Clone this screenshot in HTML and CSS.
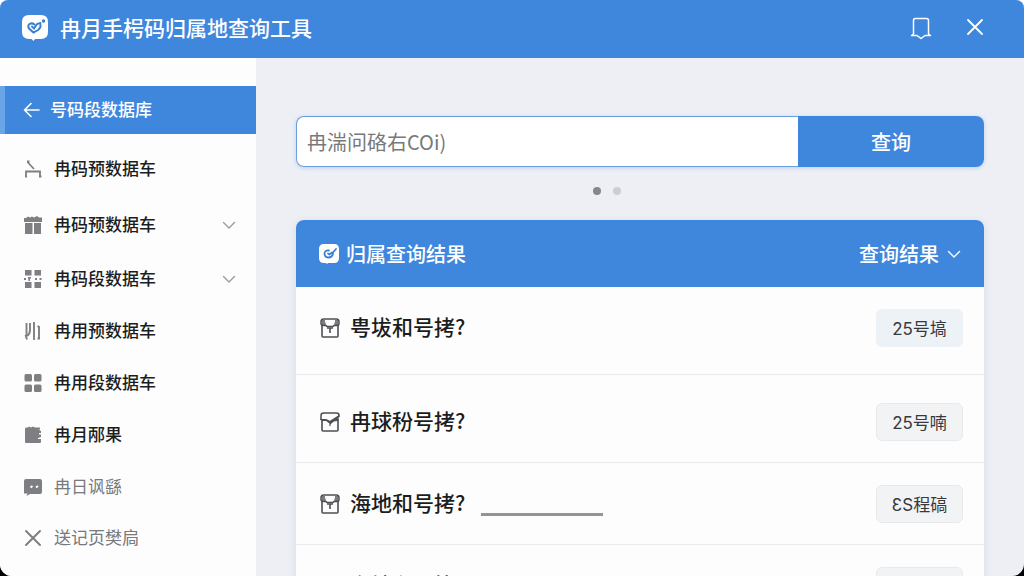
FILE: index.html
```html
<!DOCTYPE html>
<html lang="zh-CN">
  <head>
    <meta charset="UTF-8" />
    <meta name="viewport" content="width=device-width, initial-scale=1.0" />
    <title>冉月手枵码归属地查询工具</title>
    <link rel="stylesheet" href="styles.css">
  </head>
  <body>
    <!-- shared symbols -->
    <svg class="symbols" aria-hidden="true">
      <symbol id="chevron" viewBox="0 0 14 14">
        <path d="M1.5 4.5 7 10l5.5-5.5" fill="none" stroke="currentColor" stroke-width="1.4" stroke-linecap="round" stroke-linejoin="round" />
      </symbol>
      <symbol id="box" viewBox="0 0 20 20">
        <path d="M2 7v11q0 1 1 1h14q1 0 1-1V7" fill="none" stroke="currentColor" stroke-width="1.6" />
        <path d="M3.500 1h13Q19 1 19 4v1q0 2.500-2 2.500h-2.500q-1 0-1.500 1H7q-.5-1-1.500-1H3Q1 7.500 1 5V4q0-3 2.500-3z" fill="none" stroke="currentColor" stroke-width="1.5" />
        <path d="M2 2h3v1.500l1 3-1 1H2zM18 2h-3v1.500l-1 3 1 1h3z" fill="currentColor" opacity=".75" />
        <path d="M7 10h6M10 10v5" fill="none" stroke="currentColor" stroke-width="1.6" />
      </symbol>
      <symbol id="box-check" viewBox="0 0 20 20">
        <path d="M2 7v11q0 1 1 1h14q1 0 1-1V7" fill="none" stroke="currentColor" stroke-width="1.6" />
        <path d="M1 8V3.500Q1 1 3.500 1h13Q19 1 19 3.500V5" fill="none" stroke="currentColor" stroke-width="1.5" />
        <path d="M1 7.500h5l4 2 8.500-5.500-1 4.500-4 .5-3 2.500-4-3H2zM10 10v4" fill="currentColor" stroke="currentColor" stroke-width="1.2" />
      </symbol>
    </svg>

    <div class="app">
      <header class="titlebar">
        <svg class="logo" viewBox="0 0 26 26" aria-hidden="true">
          <path d="M7 0h12q7 0 7 7v10q0 7-7 7h-6l-1.500 2-2-2H7q-7 0-7-7V7q0-7 7-7z" fill="#fff" />
          <path d="M18.500 10q.5 3-2.500 5l-4.500 2.500L7.500 14q-2.500-3 0-5 2.500-1.500 5 .5" fill="none" stroke="#3a7fcd" stroke-width="2" stroke-linecap="round" />
          <path d="m10 11.500 2 2 3-4.500 3.500-1" fill="none" stroke="#3a7fcd" stroke-width="2" stroke-linecap="round" />
          <circle cx="21.500" cy="6" r="1.700" fill="#3a7fcd" />
        </svg>
        <h1>冉月手枵码归属地查询工具</h1>
        <button class="icon-btn" aria-label="收藏">
          <svg viewBox="0 0 24 24"><path d="M4.500 18V4.500q0-2 2-2h11q2 0 2 2V18l2 1.500H16l-4 3-4-3H2.500z" fill="none" stroke="currentColor" stroke-width="1.500" stroke-linejoin="round" /></svg>
        </button>
        <button class="icon-btn" aria-label="关闭">
          <svg viewBox="0 0 24 24"><path d="m5 4 14 14M19 4 5 18" fill="none" stroke="currentColor" stroke-width="1.800" stroke-linecap="round" /></svg>
        </button>
      </header>

      <div class="content">
        <nav class="sidebar">
          <a class="nav-item active" href="#">
            <svg class="nav-icon" viewBox="0 0 18 18"><path d="M16 9H1.500M8 2.500 1.500 9 8 15.500" fill="none" stroke="currentColor" stroke-width="1.600" stroke-linecap="round" stroke-linejoin="round" /></svg>
            <span>号码段数据库</span>
          </a>
          <a class="nav-item tall" href="#">
            <svg class="nav-icon" viewBox="0 0 18 18"><path d="M3.500 2 10 9M3 1.500h2.500M2 17v-5.500h14V17M1 16.500h2M15 16.500h2.500" fill="none" stroke="currentColor" stroke-width="1.800" /></svg>
            <span>冉码预数据车</span>
          </a>
          <a class="nav-item tall" href="#">
            <svg class="nav-icon" viewBox="0 0 18 18"><path d="M0 2h2l2-1.500L6 1.500 8 .5l2 1L13 0l2 1.500h3V6H0zM1 7h7.500v11H1zM10 7h7v11h-7z" fill="currentColor" /></svg>
            <span>冉码预数据车</span>
            <svg class="chevron"><use href="#chevron" /></svg>
          </a>
          <a class="nav-item" href="#">
            <svg class="nav-icon" viewBox="0 0 18 18"><path d="M1 0h6.500v5.500H1zM10.500 0H17v5.500h-6.500zM1 12h6.500v6H1zM10.500 12H17v6h-6.500zM0 8h2v2H0zM4 7h3v1.500H6V11H4.500zM11 8h2v2h-2zM15.500 8h2v2h-2z" fill="currentColor" /></svg>
            <span>冉码段数据车</span>
            <svg class="chevron"><use href="#chevron" /></svg>
          </a>
          <a class="nav-item" href="#">
            <svg class="nav-icon" viewBox="0 0 18 18"><path d="M2.500 1v13M1.500 13l1.500 4.500M6 1v7q0 4-3 6M10 0v18M15 4v12M13.500 4.500H15M13.500 16.500H16" fill="none" stroke="currentColor" stroke-width="1.900" /></svg>
            <span>冉用预数据车</span>
          </a>
          <a class="nav-item" href="#">
            <svg class="nav-icon" viewBox="0 0 18 18" fill="currentColor"><rect x="0.500" y="0" width="7.500" height="7.500" rx="1.500" /><rect x="10" y="0" width="7.500" height="7.500" rx="1.500" /><rect x="0.500" y="10.500" width="7.500" height="7.500" rx="1.500" /><rect x="10" y="10.500" width="7.500" height="7.500" rx="1.500" /></svg>
            <span>冉用段数据车</span>
          </a>
          <a class="nav-item" href="#">
            <svg class="nav-icon" viewBox="0 0 18 18"><path d="M1 3q0-1.500 1-1.500h2L5 .5l2 1 2-1 2 1h5v2h-1.500L17 5v2h-2v1.500h2V11l-3 1v1h3v3q0 1-1 1H2q-1 0-1-1z" fill="currentColor" /></svg>
            <span>冉月邴果</span>
          </a>
          <a class="nav-item muted" href="#">
            <svg class="nav-icon" viewBox="0 0 18 18"><path d="M2 1h14q2 0 2 2v11q0 2-2 2H6l-3.500 2 1-2.500H0V3q0-2 2-2z" fill="currentColor" /><path d="M6.500 9.500 8.500 8M12 9.500 14 8" stroke="#fff" stroke-width="2" /></svg>
            <span>冉日讽繇</span>
          </a>
          <a class="nav-item muted" href="#">
            <svg class="nav-icon" viewBox="0 0 18 18"><path d="m2 2 14 14M16 2 2 16" fill="none" stroke="currentColor" stroke-width="2" stroke-linecap="round" /></svg>
            <span>送记页樊扃</span>
          </a>
        </nav>

        <main class="main">
          <form class="search">
            <input type="text" placeholder="冉湍问硌右COi)" aria-label="号码" />
            <button type="button">查询</button>
          </form>
          <div class="dots"><i class="dot on"></i><i class="dot"></i></div>

          <section class="card">
            <div class="card-head">
              <svg class="card-logo" viewBox="0 0 20 20" aria-hidden="true">
                <path d="M5 0h10q5 0 5 5v9q0 5-5 5H9l-1 1-1-1H5q-5 0-5-5V5q0-5 5-5z" fill="#fff" />
                <path d="M10 6.500q-4.500-.5-4.500 3.500.5 3.500 4.500 3.500 4-.5 4-5L17 5M9 9.500l1.500 1L13 8.500" fill="none" stroke="#3a7fcd" stroke-width="1.800" stroke-linecap="round" />
              </svg>
              <h2>归属查询结果</h2>
              <button class="filter" type="button">查询结果 <svg><use href="#chevron" /></svg></button>
            </div>
            <ul class="results">
              <li class="result first">
                <svg class="box"><use href="#box" /></svg>
                <span class="name">甹坺和号拷?</span>
                <button class="tag blue" type="button">25号塙</button>
              </li>
              <li class="result second">
                <svg class="box"><use href="#box-check" /></svg>
                <span class="name">冉球秎号拷?</span>
                <button class="tag" type="button">25号喃</button>
              </li>
              <li class="result">
                <svg class="box"><use href="#box" /></svg>
                <label class="name" for="place">海地和号拷?</label>
                <input class="blank" id="place" type="text" />
                <button class="tag" type="button">ƐS程碻</button>
              </li>
              <li class="result">
                <svg class="box"><use href="#box" /></svg>
                <span class="name">海地和号拷?</span>
                <button class="tag" type="button">25号塙</button>
              </li>
            </ul>
          </section>
        </main>
      </div>
    </div>
  </body>
</html>
```
FILE: styles.css
```css
* {
  margin: 0;
  padding: 0;
  box-sizing: border-box;
}
html {
  background: linear-gradient(#fff 50%, #000 50%);
}
body,
html {
  height: 100%;
  overflow: hidden;
}
body,
button,
input {
  font-family: "Noto Sans CJK SC", sans-serif;
}
button {
  border: none;
  background: none;
  cursor: pointer;
}
.symbols {
  display: none;
}
.app {
  display: flex;
  flex-direction: column;
  height: 100vh;
  border-radius: 8px 8px 12px 12px;
  overflow: hidden;
  background: #eeeff5;
}

/* title bar */
.titlebar {
  display: flex;
  align-items: center;
  flex: none;
  height: 58px;
  padding: 0 37px 2px 22px;
  background: #3f87dd;
  color: #fff;
}
.logo {
  width: 26px;
  height: 26px;
  margin-right: 12px;
}
h1 {
  flex: 1;
  padding-bottom: 2px;
  font-size: 21px;
  font-weight: 500;
  line-height: 30px;
}
.icon-btn {
  width: 24px;
  height: 24px;
  margin-left: 30px;
  color: #fff;
}
.icon-btn svg {
  display: block;
}

.content {
  display: flex;
  flex: 1;
  min-height: 0;
}

/* sidebar */
.sidebar {
  flex: none;
  width: 256px;
  padding-top: 28px;
  background: #fdfdfe;
}
.nav-item {
  display: flex;
  align-items: center;
  height: 52px;
  padding: 0 20px 0 24px;
  color: #1c1d20;
  font-size: 17px;
  font-weight: 500;
  text-decoration: none;
}
.nav-item span {
  flex: 1;
  padding-bottom: 3px;
}
.nav-icon {
  width: 18px;
  height: 18px;
  margin-right: 12px;
  color: #7d7f82;
}
.nav-item.tall {
  height: 56px;
}
.nav-item.muted {
  height: 51px;
  color: #77797c;
  font-weight: 400;
}
.nav-item.active {
  height: 48px;
  margin-bottom: 7px;
  padding-left: 18px;
  border-left: 5px solid #6ba5e9;
  background: #3f87dd;
  color: #fff;
}
.active .nav-icon {
  margin-right: 9px;
  color: #fff;
}
.chevron {
  width: 14px;
  height: 14px;
  color: #999b9f;
}

/* search */
.main {
  flex: 1;
  min-width: 0;
  padding: 58px 40px 0;
  overflow: hidden;
}
.search {
  display: flex;
  height: 51px;
  border-radius: 8px;
  box-shadow: 0 1px 4px rgba(63, 135, 221, 0.3);
}
.search input {
  flex: 1;
  min-width: 0;
  padding: 0 10px;
  border: 1px solid #6b9fdc;
  border-right: none;
  border-radius: 8px 0 0 8px;
  background: #fff;
  font-size: 20px;
  outline: none;
}
.search input::placeholder {
  color: #77797a;
}
.search button {
  width: 186px;
  border-radius: 0 8px 8px 0;
  background: #3f87dd;
  color: #fff;
  font-size: 20px;
  font-weight: 500;
}
.dots {
  display: flex;
  justify-content: center;
  gap: 12px;
  padding: 20px 66px 25px 0;
}
.dot {
  width: 8px;
  height: 8px;
  border-radius: 50%;
  background: #cdced3;
}
.dot.on {
  background: #85878b;
}

/* results */
.card {
  border-radius: 8px 8px 0 0;
  background: #fdfdfe;
  box-shadow: 0 2px 8px rgba(60, 80, 120, 0.12);
}
.card-head {
  display: flex;
  align-items: center;
  height: 67px;
  padding: 0 23px;
  border-radius: 8px 8px 0 0;
  background: #3f87dd;
  color: #fff;
}
.card-logo {
  width: 20px;
  height: 20px;
  margin-right: 7px;
}
h2 {
  flex: 1;
  font-size: 20px;
  font-weight: 500;
}
.filter {
  display: flex;
  align-items: center;
  gap: 8px;
  color: #fff;
  font-size: 20px;
  font-weight: 500;
}
.filter svg {
  width: 14px;
  height: 14px;
}
.results {
  list-style: none;
}
.result {
  display: flex;
  align-items: center;
  padding: 22px 21px 21px 24px;
  border-bottom: 1px solid #e9eaed;
}
.result.first {
  padding-bottom: 27px;
}
.result.second {
  padding-top: 28px;
}
.box {
  width: 20px;
  height: 20px;
  margin-right: 10px;
  color: #4d4f52;
}
.name {
  padding-bottom: 4px;
  color: #1c1d20;
  font-size: 21px;
  font-weight: 500;
  line-height: 30px;
}
.blank {
  width: 122px;
  height: 24px;
  margin-left: 16px;
  border: none;
  border-bottom: 3px solid #929496;
  background: none;
  font-size: 17px;
  outline: none;
}
.tag {
  width: 87px;
  height: 38px;
  margin-left: auto;
  padding-bottom: 2px;
  border: 1px solid #e8e9eb;
  border-radius: 6px;
  background: #f2f3f4;
  color: #37393c;
  font-family: Inter, "Noto Sans CJK SC", sans-serif;
  font-size: 17px;
}
.tag.blue {
  border-color: #edf2f7;
  background: #edf2f7;
}
```
